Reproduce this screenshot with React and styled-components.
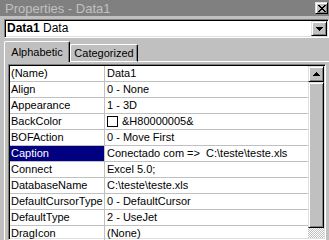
import React from 'react'
import styled, { createGlobalStyle } from 'styled-components'

const GlobalStyle = createGlobalStyle`
  html, body {
    margin: 0;
    padding: 0;
    background: #c0c0c0;
  }
  body {
    font-family: "Liberation Sans", Arial, sans-serif;
  }
`

const rows = [
  { name: '(Name)', value: 'Data1' },
  { name: 'Align', value: '0 - None' },
  { name: 'Appearance', value: '1 - 3D' },
  { name: 'BackColor', value: '&H80000005&', swatch: true },
  { name: 'BOFAction', value: '0 - Move First' },
  { name: 'Caption', value: 'Conectado com =>  C:\\teste\\teste.xls', selected: true },
  { name: 'Connect', value: 'Excel 5.0;' },
  { name: 'DatabaseName', value: 'C:\\teste\\teste.xls' },
  { name: 'DefaultCursorType', value: '0 - DefaultCursor' },
  { name: 'DefaultType', value: '2 - UseJet' },
  { name: 'DragIcon', value: '(None)' },
]

const App = () => {
  return (
    <Window>
      <GlobalStyle />
      <TitleBar>
        <Title>Properties - Data1</Title>
        <CloseButton>
          <svg width="8" height="7" viewBox="0 0 8 7" shapeRendering="crispEdges">
            <path
              fill="#000"
              d="M0 0h2v1H0z M6 0h2v1H6z M1 1h2v1H1z M5 1h2v1H5z M2 2h4v1H2z M3 3h2v1H3z M2 4h4v1H2z M1 5h2v1H1z M5 5h2v1H5z M0 6h2v1H0z M6 6h2v1H6z"
            />
          </svg>
        </CloseButton>
      </TitleBar>

      <Combo>
        <ComboText>
          <b>Data1</b> Data
        </ComboText>
        <DropButton>
          <svg width="7" height="4" viewBox="0 0 7 4" shapeRendering="crispEdges">
            <path fill="#000" d="M0 0h7v1H0z M1 1h5v1H1z M2 2h3v1H2z M3 3h1v1H3z" />
          </svg>
        </DropButton>
      </Combo>

      <TabRow>
        <Tab $active $w={66}>Alphabetic</Tab>
        <Tab $w={68}>Categorized</Tab>
        <TabFiller />
      </TabRow>

      <Panel>
        <Grid>
          <Rows>
            {rows.map((r) => (
              <Row key={r.name}>
                <NameCell $selected={r.selected}>{r.name}</NameCell>
                <ValueCell>
                  {r.swatch && <Swatch />}
                  {r.value}
                </ValueCell>
              </Row>
            ))}
          </Rows>
          <ScrollBar>
            <ScrollButton>
              <svg width="7" height="4" viewBox="0 0 7 4" shapeRendering="crispEdges">
                <path fill="#000" d="M3 0h1v1H3z M2 1h3v1H2z M1 2h5v1H1z M0 3h7v1H0z" />
              </svg>
            </ScrollButton>
            <Thumb />
            <Track />
          </ScrollBar>
        </Grid>
      </Panel>
    </Window>
  )
}

export default App

const Window = styled.div`
  width: 329px;
  height: 240px;
  overflow: hidden;
  background: #c0c0c0;
  display: flex;
  flex-direction: column;
`

const TitleBar = styled.div`
  height: 16px;
  flex: none;
  background: #808080;
  display: flex;
  align-items: center;
  justify-content: space-between;
  padding: 0 1px 0 5px;
`

const Title = styled.span`
  font-family: "Liberation Sans Narrow", "Liberation Sans", sans-serif;
  font-size: 13px;
  line-height: 16px;
  padding-top: 1px;
  color: #c0c0c0;
  white-space: nowrap;
`

const raised = `
  background: #c0c0c0;
  box-sizing: border-box;
  border: 1px solid;
  border-color: #dfdfdf #000 #000 #dfdfdf;
  box-shadow: inset 1px 1px #fff, inset -1px -1px #808080;
`

const CloseButton = styled.div`
  ${raised}
  width: 13px;
  height: 12px;
  display: flex;
  align-items: center;
  justify-content: center;
`

const Combo = styled.div`
  flex: none;
  margin: 3px 0 0 4px;
  height: 19px;
  box-sizing: border-box;
  background: #fff;
  border: 1px solid;
  border-color: #808080 #fff #fff #808080;
  box-shadow: inset 1px 1px #000, inset -1px -1px #dfdfdf;
  padding: 1px;
  display: flex;
`

const ComboText = styled.div`
  flex: 1;
  padding-left: 1px;
  font-size: 12px;
  line-height: 15px;
  color: #000;
  white-space: pre;
`

const DropButton = styled.div`
  ${raised}
  width: 16px;
  display: flex;
  align-items: center;
  justify-content: center;
`

const TabRow = styled.div`
  flex: none;
  height: 21px;
  margin-top: 3px;
  padding-left: 4px;
  display: flex;
  align-items: flex-end;
`

const Tab = styled.div`
  box-sizing: border-box;
  width: ${(p) => p.$w}px;
  height: ${(p) => (p.$active ? 21 : 18)}px;
  padding-top: ${(p) => (p.$active ? 4 : 2)}px;
  border: 1px solid #fff;
  border-right: 1px solid #000;
  border-bottom: ${(p) => (p.$active ? 'none' : '1px solid #fff')};
  border-radius: 2px 2px 0 0;
  box-shadow: inset -1px 0 #808080;
  font-size: 11px;
  line-height: 13px;
  text-align: center;
  color: #000;
`

const TabFiller = styled.div`
  flex: 1;
  border-bottom: 1px solid #fff;
`

const Panel = styled.div`
  flex: 1;
  min-height: 0;
  margin-left: 4px;
  border-left: 1px solid #fff;
  padding: 2px 0 0 3px;
  display: flex;
`

const Grid = styled.div`
  width: 318px;
  box-sizing: border-box;
  background: #fff;
  border: 1px solid;
  border-color: #808080 #fff #fff #808080;
  box-shadow: inset 1px 1px #000, inset -1px -1px #dfdfdf;
  padding: 1px;
  display: flex;
`

const Rows = styled.div`
  flex: 1;
  display: flex;
  flex-direction: column;
`

const Row = styled.div`
  flex: none;
  height: 16px;
  box-sizing: border-box;
  border-bottom: 1px solid #c0c0c0;
  display: grid;
  grid-template-columns: 95px 1fr;
  font-size: 11px;
  line-height: 15px;
  white-space: pre;
`

const NameCell = styled.div`
  padding-left: 1px;
  border-right: 1px solid #c0c0c0;
  background: ${(p) => (p.$selected ? '#000080' : 'transparent')};
  color: ${(p) => (p.$selected ? '#fff' : '#000')};
  overflow: hidden;
`

const ValueCell = styled.div`
  padding-left: 2px;
  color: #000;
  display: flex;
  align-items: center;
  overflow: hidden;
`

const Swatch = styled.span`
  width: 11px;
  height: 11px;
  box-sizing: border-box;
  border: 1px solid #000;
  background: #fff;
  margin-right: 4px;
  flex: none;
`

const ScrollBar = styled.div`
  width: 16px;
  display: flex;
  flex-direction: column;
`

const ScrollButton = styled.div`
  ${raised}
  height: 16px;
  flex: none;
  display: flex;
  align-items: center;
  justify-content: center;
`

const Thumb = styled.div`
  ${raised}
  height: 146px;
  flex: none;
`

const Track = styled.div`
  flex: 1;
  background-color: #fff;
  background-image: conic-gradient(#c0c0c0 25%, transparent 0 50%, #c0c0c0 0 75%, transparent 0);
  background-size: 2px 2px;
`
